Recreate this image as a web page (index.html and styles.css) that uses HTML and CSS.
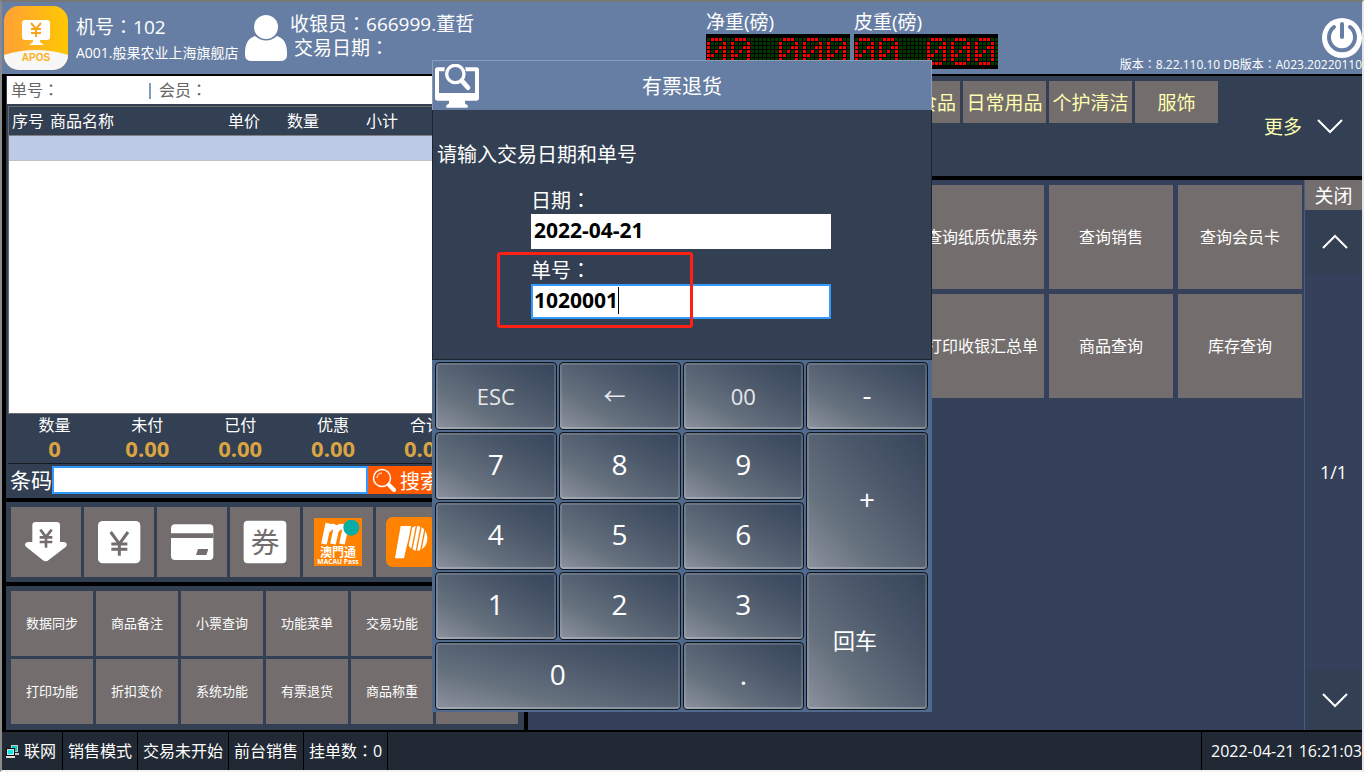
FILE: index.html
```html
<!DOCTYPE html>
<html lang="zh-CN">
<head>
<meta charset="utf-8">
<title>APOS 收银台</title>
<link rel="stylesheet" href="styles.css">
</head>
<body>
<svg class="defs" aria-hidden="true">
  <defs>
    <pattern id="dots" width="4" height="4" patternUnits="userSpaceOnUse"><rect width="3" height="3" fill="#003800"/></pattern>
    <path id="led0" d="M4 1.5h11M0 5.5h3M16 5.5h3M0 9.5h3M12 9.5h7M0 13.5h3M8 13.5h3M16 13.5h3M0 17.5h7M16 17.5h3M0 21.5h3M16 21.5h3M4 25.5h11" fill="none" stroke="#f00" stroke-width="3" stroke-dasharray="3 1"/>
    <g id="readout" shape-rendering="crispEdges">
      <rect width="144" height="35" fill="#000"/>
      <g transform="translate(1 4)">
        <rect width="143" height="27" fill="url(#dots)"/>
        <use href="#led0"/><use href="#led0" x="24"/><use href="#led0" x="72"/><use href="#led0" x="96"/><use href="#led0" x="120"/>
      </g>
    </g>
  </defs>
</svg>

<div class="app">
  <header class="header">
    <div class="identity">
      <svg class="logo" viewBox="0 0 64 64" role="img" aria-label="APOS">
        <defs>
          <linearGradient id="lg"><stop offset="0" stop-color="#ffa035"/><stop offset="1" stop-color="#ffc802"/></linearGradient>
          <clipPath id="lc"><rect width="64" height="64" rx="15"/></clipPath>
        </defs>
        <g clip-path="url(#lc)">
          <rect width="64" height="64" fill="url(#lg)"/>
          <path d="M0 49Q32 39 64 49V64H0Z" fill="#f7f7f7"/>
        </g>
        <path d="M21 14h22a3 3 0 0 1 3 3v14a3 3 0 0 1-3 3h-7v2l4 3H25l4-3v-2h-8a3 3 0 0 1-3-3V17a3 3 0 0 1 3-3z" fill="#fff"/>
        <path d="M27 17l5 6 5-6M32 23v8M27 23h10M27 27h10" fill="none" stroke="#f9a61d" stroke-width="2"/>
        <text x="32" y="55" class="logo-text">APOS</text>
      </svg>
      <div class="station">
        <div class="line">机号<span class="colon" lang="zh-Hant">：</span>102</div>
        <div class="store">A001.般果农业上海旗舰店</div>
      </div>
      <svg class="avatar" viewBox="0 0 42 46" aria-hidden="true">
        <circle cx="21" cy="12" r="12" fill="#fff"/>
        <path d="M10 21q11 9 22 0 10 3 10 17v2q0 6-7 6H7q-7 0-7-6v-2Q0 24 10 21z" fill="#fff"/>
      </svg>
      <div class="cashier">
        <div class="line">收银员<span class="colon" lang="zh-Hant">：</span>666999.董哲</div>
        <div class="line date">交易日期<span class="colon" lang="zh-Hant">：</span></div>
      </div>
    </div>
    <div class="scales">
      <div class="scale"><span class="scale-label">净重(磅)</span><svg width="144" height="35" role="img" aria-label="00.000"><use href="#readout"/></svg></div>
      <div class="scale"><span class="scale-label">皮重(磅)</span><svg width="144" height="35" role="img" aria-label="00.000"><use href="#readout"/></svg></div>
    </div>
    <div class="system">
      <button class="power" type="button" aria-label="退出">
        <svg width="40" height="40" viewBox="0 0 40 40">
          <circle cx="20" cy="20" r="20" fill="#fff"/>
          <path d="M12 9A13 13 0 1 0 28 9" fill="none" stroke="#667ea3" stroke-width="4" stroke-linecap="round"/>
          <path d="M20 6v13" stroke="#667ea3" stroke-width="4" stroke-linecap="round"/>
        </svg>
      </button>
      <div class="version">版本<span class="colon" lang="zh-Hant">：</span>8.22.110.10 DB版本<span class="colon" lang="zh-Hant">：</span>A023.20220110</div>
    </div>
  </header>

  <main class="main">
    <section class="left">
      <div class="sale">
        <div class="order-bar"><span class="order-no">单号<span class="colon" lang="zh-Hant">：</span></span><span class="member">会员<span class="colon" lang="zh-Hant">：</span></span></div>
        <div class="items-box">
          <table class="items">
            <thead><tr><th class="c-no">序号</th><th class="c-name">商品名称</th><th class="c-price">单价</th><th class="c-qty">数量</th><th>小计</th></tr></thead>
            <tbody><tr><td colspan="5"></td></tr></tbody>
          </table>
        </div>
        <dl class="totals">
          <div><dt>数量</dt><dd>0</dd></div>
          <div><dt>未付</dt><dd>0.00</dd></div>
          <div><dt>已付</dt><dd>0.00</dd></div>
          <div><dt>优惠</dt><dd>0.00</dd></div>
          <div><dt>合计</dt><dd>0.00</dd></div>
        </dl>
        <div class="barcode">
          <label for="barcode">条码</label>
          <input id="barcode" type="text">
          <button class="search" type="button">
            <svg width="24" height="24" viewBox="0 0 24 24" fill="none" stroke="#fff"><circle cx="10" cy="10" r="8.5" stroke-width="1.5"/><path d="M5 10a5 5 0 0 1 5-5" stroke-width="1"/><path d="M17 17l5 5" stroke-width="4" stroke-linecap="round"/></svg>
            搜索
          </button>
        </div>
      </div>

      <div class="payments">
        <button type="button" aria-label="收款">
          <svg viewBox="0 0 210 210"><path d="M74 45h63q10 0 10 10v50h13q13 5 4 15l-50 38q-10 9-20 0l-48-38q-10-10 4-15h14V55q0-10 10-10z" fill="#fff"/><path d="M88 68l17 22 17-22M105 90v32M86 91h38M86 105h38" fill="none" stroke="#736e6d" stroke-width="8"/></svg>
        </button>
        <button type="button" aria-label="现金">
          <svg viewBox="0 0 210 210"><rect x="42" y="42" width="127" height="127" rx="14" fill="#fff"/><path d="M80 75l26 36 26-36M106 110v36M82 111h48M82 127h48" fill="none" stroke="#736e6d" stroke-width="9"/></svg>
        </button>
        <button type="button" aria-label="银行卡">
          <svg viewBox="0 0 210 210"><rect x="42" y="52" width="127" height="107" rx="12" fill="#fff"/><path d="M42 79h127v14H42zM123 126h31l-6 18h-31z" fill="#736e6d"/></svg>
        </button>
        <button type="button" aria-label="券">
          <svg viewBox="0 0 210 210"><rect x="41" y="41" width="128" height="128" rx="12" fill="#fff"/><text x="105" y="137" class="coupon">券</text></svg>
        </button>
        <button type="button" aria-label="澳門通">
          <svg viewBox="0 0 210 210"><rect x="33" y="33" width="144" height="144" fill="#ff8200"/><path d="M63 111L76 49M74 72q6-15 18-13 9 2 6 15l-8 37M99 72q6-15 19-13 10 2 7 15l-8 37" fill="none" stroke="#fff" stroke-width="17"/><circle cx="145" cy="62" r="24" fill="#08ada5"/><text x="105" y="149" class="mp-cn">澳門通</text><text x="105" y="171" class="mp-en">MACAU Pass</text></svg>
        </button>
        <button type="button" aria-label="支付">
          <svg viewBox="0 0 210 210"><rect x="30" y="30" width="150" height="150" rx="20" fill="#ff8200"/><path d="M74 57h32L84 154H57z" fill="#fff"/><ellipse cx="123" cy="94" rx="31" ry="37" fill="#fff"/><path d="M108 54L94 126M122 54l-15 76M136 54l-15 78M148 62l-14 70" stroke="#ff8200" stroke-width="4"/></svg>
        </button>
      </div>

      <div class="functions">
        <button type="button">数据同步</button><button type="button">商品备注</button><button type="button">小票查询</button><button type="button">功能菜单</button><button type="button">交易功能</button><button type="button" aria-hidden="true"></button>
        <button type="button">打印功能</button><button type="button">折扣变价</button><button type="button">系统功能</button><button type="button">有票退货</button><button type="button">商品称重</button><button type="button" aria-hidden="true"></button>
      </div>
    </section>

    <section class="right">
      <div class="categories">
        <div class="cat-tiles">
          <button type="button" class="cat-first">食品</button><button type="button">日常用品</button><button type="button">个护清洁</button><button type="button">服饰</button>
        </div>
        <button type="button" class="more">更多
          <svg width="26" height="16" viewBox="0 0 26 16"><path d="M1 2l12 12L25 2" fill="none" stroke="#fff" stroke-width="2"/></svg>
        </button>
      </div>
      <div class="shortcuts">
        <div class="grid">
          <button type="button" class="col-4">查询纸质优惠券</button><button type="button">查询销售</button><button type="button">查询会员卡</button>
          <button type="button" class="col-4">打印收银汇总单</button><button type="button">商品查询</button><button type="button">库存查询</button>
        </div>
        <nav class="pager">
          <button type="button" class="close">关闭</button>
          <button type="button" class="step" aria-label="上一页"><svg width="26" height="16" viewBox="0 0 26 16"><path d="M1 14L13 2l12 12" fill="none" stroke="#fff" stroke-width="2"/></svg></button>
          <span class="page">1/1</span>
          <button type="button" class="step" aria-label="下一页"><svg width="26" height="16" viewBox="0 0 26 16"><path d="M1 2l12 12L25 2" fill="none" stroke="#fff" stroke-width="2"/></svg></button>
        </nav>
      </div>
    </section>
  </main>

  <footer class="status">
    <span class="cell net">
      <svg width="13" height="13" viewBox="0 0 13 13" shape-rendering="crispEdges"><path d="M5 0h7v7H5zM4 8h9v2H4z" fill="#c8c8c8"/><path d="M6 1h5v5H6z" fill="#0cc"/><path d="M0 3h9v8H0z" fill="#111"/><path d="M1 4h7v6H1zM0 11h9v2H0z" fill="#ddd"/><path d="M2 5h5v4H2z" fill="#0ee"/></svg>
      联网</span>
    <span class="cell">销售模式</span><span class="cell">交易未开始</span><span class="cell">前台销售</span><span class="cell">挂单数<span class="colon" lang="zh-Hant">：</span>0</span>
    <time class="clock">2022-04-21 16:21:03</time>
  </footer>
</div>

<div class="overlay">
  <form class="dialog" role="dialog" aria-labelledby="dlg-title">
    <div class="dlg-head">
      <svg class="dlg-icon" viewBox="0 0 132 132" aria-hidden="true">
        <path d="M8 10h22q-3 8-1 12H12v65h108V22h-28q1-6-2-12h34q8 0 8 8v84q0 8-8 8H90v7q0 4 8 6v8H34v-8q8-2 8-6v-7H8q-8 0-8-8V18q0-8 8-8z" fill="#fff"/>
        <circle cx="61" cy="30" r="26" fill="none" stroke="#fff" stroke-width="10"/><path d="M80 50l19 21" stroke="#fff" stroke-width="14" stroke-linecap="round"/>
      </svg>
      <h1 id="dlg-title">有票退货</h1>
    </div>
    <div class="dlg-body">
      <p class="prompt">请输入交易日期和单号</p>
      <div class="fields">
        <label for="date">日期<span class="colon" lang="zh-Hant">：</span></label>
        <input id="date" type="text" value="2022-04-21">
        <label for="order">单号<span class="colon" lang="zh-Hant">：</span></label>
        <div class="focus-wrap">
          <input id="order" class="focused" type="text" value="1020001">
          <i class="caret"></i>
          <i class="mark"></i>
        </div>
      </div>
    </div>
    <div class="keypad">
      <button type="button" class="word">ESC</button><button type="button" class="word arrow">←</button><button type="button" class="word">00</button><button type="button">-</button>
      <button type="button">7</button><button type="button">8</button><button type="button">9</button><button type="button" class="tall">+</button>
      <button type="button">4</button><button type="button">5</button><button type="button">6</button>
      <button type="button">1</button><button type="button">2</button><button type="button">3</button><button type="button" class="tall enter">回车</button>
      <button type="button" class="wide">0</button><button type="button">.</button>
    </div>
  </form>
</div>
</body>
</html>
```
FILE: styles.css
```css
* { box-sizing: border-box; }

body {
  margin: 0;
  overflow: hidden;
  font-family: "Open Sans", "Noto Sans CJK SC", sans-serif;
  font-size: 16px;
  color: #fff;
  background: #f0f0f0;
}

button {
  border: 0;
  padding: 0;
  font: inherit;
  color: inherit;
  background: #736e6d;
  white-space: nowrap;
}

input { font: inherit; border: 0; border-radius: 0; outline: 0; min-width: 0; }
svg { display: block; flex: none; }
.defs { position: absolute; width: 0; height: 0; }
.colon { font-family: "Noto Sans CJK TC", sans-serif; line-height: 1; }

.app {
  display: flex;
  flex-direction: column;
  min-height: 100vh;
  border: 2px solid;
  border-color: #777 #e6e6e6 #f4f4f4 #8a8a8a;
  background: #000;
}

/* Header */
.header {
  display: flex;
  height: 72px;
  background: #667ea3;
  white-space: nowrap;
}
.identity { display: flex; flex: 0 1 704px; padding: 4px 0 0 2px; }
.logo { width: 64px; height: 64px; }
.logo-text { font: bold 10px "Liberation Sans", sans-serif; fill: #fbb01c; text-anchor: middle; }
.station { width: 169px; margin-left: 8px; padding-top: 7px; }
.line { font-size: 19px; line-height: 28px; }
.store { font-size: 14px; line-height: 24px; }
.avatar { width: 42px; height: 46px; margin-top: 9px; }
.cashier { margin-left: 3px; padding-top: 6px; }
.cashier .line { line-height: 24px; }
.cashier .date { padding-left: 4px; }
.scales { display: flex; gap: 4px; }
.scale { display: flex; flex-direction: column; padding-top: 8px; }
.scale-label { font-size: 19px; line-height: 24px; }
.system {
  display: flex;
  flex: 1;
  flex-direction: column;
  align-items: flex-end;
  padding-top: 16px;
  overflow: hidden;
}
.power { background: none; height: 40px; }
.version { font-size: 12px; line-height: 14px; }

/* Work area */
.main {
  display: grid;
  grid-template-columns: minmax(440px, 518px) 1fr;
  gap: 4px;
  flex: 1;
  padding: 2px 0 0 4px;
}
.left, .right { display: flex; flex-direction: column; gap: 4px; min-width: 0; }

.sale { display: flex; flex: 1; flex-direction: column; background: #333f52; }
.order-bar {
  display: flex;
  height: 28px;
  margin-left: 1px;
  padding-left: 4px;
  line-height: 28px;
  color: #666;
  background: #fff;
}
.order-no { width: 138px; }
.member::before {
  content: "";
  display: inline-block;
  width: 2px;
  height: 16px;
  margin-right: 8px;
  vertical-align: -3px;
  background: #7f9dbd;
}
.items-box { flex: 1; margin: 2px 0 0 2px; border: 1px solid #6b6b6b; background: #fff; }
.items { width: 100%; border-collapse: collapse; table-layout: fixed; }
.items th { height: 28px; padding: 0 0 2px 3px; font-weight: 400; text-align: left; background: #333f52; }
.items td { height: 25px; padding: 0; border-top: 1px solid #808080; border-bottom: 1px solid #c0c0c0; background: #bccae6; }
.c-no { width: 38px; }
.c-name { width: 178px; }
.c-price { width: 59px; }
.c-qty { width: 79px; }

.totals {
  display: grid;
  grid-template-columns: repeat(5, 18%);
  height: 50px;
  margin: 0 0 0 2px;
  border-bottom: 1px solid #151a20;
  text-align: center;
}
.totals dt { line-height: 23px; }
.totals dd { margin: 0; font-size: 22px; font-weight: 700; line-height: 22px; color: #d9a441; }

.barcode { display: flex; align-items: flex-start; height: 34px; padding: 2px 0 0 4px; }
.barcode label { width: 42px; font-size: 21px; line-height: 28px; white-space: nowrap; }
.barcode input { flex: 0 1 316px; height: 28px; border: 2px solid #3399ff; }
.search { display: flex; align-items: center; gap: 4px; height: 28px; padding: 0 8px 0 4px; font-size: 20px; background: #ff5a00; }

.payments {
  display: flex;
  gap: 3px;
  height: 80px;
  padding: 5px;
  overflow: hidden;
  background: #333f52;
}
.payments button { flex: none; width: 70px; height: 70px; }
.coupon { font: 86px "Noto Sans CJK SC", sans-serif; fill: #736e6d; text-anchor: middle; }
.mp-cn { font: bold 36px "Noto Sans CJK TC", sans-serif; fill: #fff; text-anchor: middle; }
.mp-en { font: bold 20px "Open Sans", sans-serif; fill: #fff; text-anchor: middle; }

.functions {
  display: grid;
  grid-template-columns: repeat(6, 1fr);
  grid-auto-rows: 65px;
  gap: 3px;
  height: 144px;
  padding: 5px 6px 5px 5px;
  font-size: 13px;
  background: #333f52;
}
.functions button, .grid button { padding-bottom: 2px; }

.categories {
  display: flex;
  justify-content: space-between;
  height: 100px;
  padding: 5px 19px 5px 5px;
  font-size: 19px;
  color: #ffffb0;
  background: #333f52;
}
.cat-tiles { display: grid; grid-template-columns: repeat(8, 83px); grid-auto-rows: 42px; gap: 3px; }
.cat-first { grid-column: 5; padding-right: 4px; text-align: right; }
.more { display: flex; align-items: center; gap: 15px; background: none; }

.shortcuts { display: flex; flex: 1; background: #35405a; }
.grid {
  display: grid;
  flex: 1;
  grid-template-columns: repeat(6, 1fr);
  grid-auto-rows: 104px;
  gap: 5px;
  padding: 5px 2px 5px 5px;
}
.col-4 { grid-column: 4; }
.pager { display: flex; flex-direction: column; width: 58px; border-left: 1px solid #4a5c85; }
.close { height: 30px; font-size: 19px; }
.step { display: grid; place-items: center; height: 60px; padding-left: 2px; background: #333f52; }
.close + .step { height: 64px; }
.page { flex: 1; display: grid; place-items: center; font-size: 18px; }

/* Status bar */
.status {
  display: flex;
  height: 40px;
  border-top: 2px solid #000;
  line-height: 38px;
  white-space: nowrap;
  background: #212934;
}
.cell { padding: 0 5px; border-right: 1px solid #000; }
.net { display: flex; align-items: center; gap: 5px; padding: 0 6px 0 4px; }
.clock { width: 161px; margin-left: auto; padding-left: 9px; border-left: 1px solid #000; overflow: hidden; }

/* Dialog */
.overlay { position: fixed; inset: 0; display: grid; place-items: center; }
.dialog { width: 500px; color: #fff; }
.dlg-head {
  display: grid;
  grid-template-columns: 44px 1fr 44px;
  align-items: center;
  height: 50px;
  padding: 0 2px;
  border: 1px solid #8a9dbd;
  border-bottom: 0;
  background: #667ea3;
}
.dlg-icon { width: 44px; height: 44px; }
.dlg-head h1 { margin: 0; font-size: 20px; font-weight: 400; text-align: center; }
.dlg-body { height: 250px; padding: 30px 4px 0; border: 1px solid #1d2430; border-top: 0; background: #333f52; font-size: 20px; }
.prompt { margin: 0; line-height: 30px; }
.fields { display: flex; flex-direction: column; width: 300px; margin: 18px 0 0 94px; }
.fields label { height: 26px; line-height: 26px; }
.fields input { width: 100%; height: 35px; padding: 0 3px 4px; font-size: 21px; font-weight: 700; color: #000; background: #fff; }
#date { margin-bottom: 9px; }
.fields .focused { display: block; padding: 0 1px 4px; border: 2px solid #3399ff; }
.focus-wrap { position: relative; }
.caret { position: absolute; left: 87px; top: 3px; width: 1px; height: 27px; background: #000; }
.mark { position: absolute; left: -34px; top: -32px; width: 196px; height: 76px; border: 3px solid #ff2015; border-radius: 3px; }

.keypad {
  display: grid;
  grid-template-columns: repeat(4, 1fr);
  grid-auto-rows: 68px;
  gap: 2px;
  padding: 2px 4px 2px 3px;
  background: #4f6a8c;
}
.keypad button {
  padding-bottom: 4px;
  border: 1px solid #10161e;
  border-radius: 4px;
  font-size: 28px;
  background: linear-gradient(to top right, #8d929e 0%, #66717e 30%, #4b586a 65%, #36445a 100%);
  box-shadow: inset 0 0 0 2px rgba(190, 195, 210, 0.22), inset 0 -2px 0 rgba(190, 195, 205, 0.3);
}
.keypad .word { padding-bottom: 0; font-size: 22px; color: #e6e8ec; }
.keypad .arrow { padding: 0 10px 4px 0; }
.keypad .tall { grid-row: span 2; }
.keypad .wide { grid-column: span 2; }
.keypad .enter { grid-column: 4; padding-right: 24px; font-size: 22px; }
```
